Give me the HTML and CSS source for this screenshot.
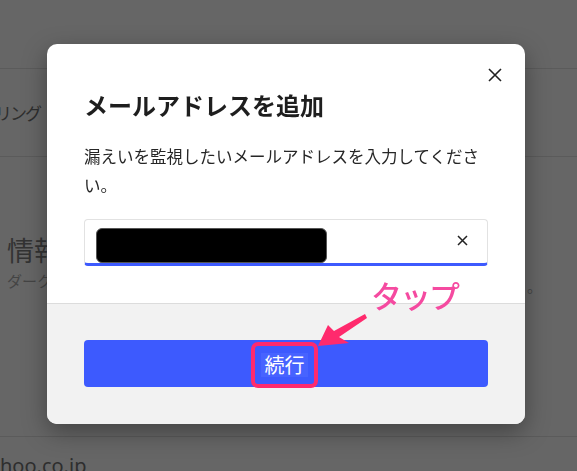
FILE: index.html
```html
<!DOCTYPE html>
<html lang="ja">
<head>
<meta charset="utf-8">
<title>メールアドレスを追加</title>
<link rel="stylesheet" href="styles.css">
</head>
<body>
<div class="page">
  <div class="row row-top"></div>
  <div class="row row-menu"><span class="menu-text">リング</span></div>
  <div class="row row-info">
    <div class="info-title">情報</div>
    <div class="info-desc"><span>ダーク</span><span class="info-end">。</span></div>
  </div>
  <div class="row row-domain">hoo.co.jp</div>
</div>

<div class="modal">
  <div class="modal-body">
    <button class="close" aria-label="閉じる">
      <svg width="14" height="14" viewBox="0 0 14 14"><path d="M1 1L13 13M13 1L1 13" stroke="#222" stroke-width="1.6" fill="none"/></svg>
    </button>
    <h1 class="title">メールアドレスを追加</h1>
    <p class="desc">漏えいを監視したいメールアドレスを入力してください。</p>
    <div class="input">
      <span class="redact"></span>
      <span class="clear">
        <svg width="11" height="11" viewBox="0 0 11 11"><path d="M1 1L10 10M10 1L1 10" stroke="#222" stroke-width="1.5" fill="none"/></svg>
      </span>
    </div>
  </div>
  <div class="modal-foot">
    <button class="btn"><span class="mark"><span class="btn-label">続行</span></span></button>
  </div>
  <div class="note">タップ</div>
  <svg class="arrow" width="80" height="60" viewBox="0 0 80 60">
    <polygon points="18,46 28,25 34,31 65,14 67,18 39,37 49,43" fill="#ff2a6d"/>
  </svg>
</div>
</body>
</html>
```
FILE: styles.css
```css
html, body {
  margin: 0;
  padding: 0;
}
body {
  width: 577px;
  height: 471px;
  overflow: hidden;
  background: #666666;
  font-family: "Noto Sans CJK JP", "Noto Sans", sans-serif;
  color: #333;
}
.page {
  display: flex;
  flex-direction: column;
}
.row {
  border-bottom: 1px solid #5b5b5b;
}
.row-top {
  height: 68px;
}
.row-menu {
  height: 87px;
  display: flex;
  align-items: center;
}
.menu-text {
  font-size: 17px;
  color: #2e2e2e;
  margin-left: -5px;
  letter-spacing: -2px;
}
.row-info {
  height: 280px;
  box-sizing: border-box;
  padding-top: 73px;
  padding-left: 7px;
}
.info-title {
  font-size: 27px;
  line-height: 40px;
  font-weight: 400;
  color: #333;
}
.info-desc {
  display: flex;
  font-size: 15px;
  line-height: 22px;
  color: #444;
}
.info-end {
  margin-left: auto;
  margin-right: 35px;
  margin-top: 5px;
}
.row-domain {
  border-bottom: none;
  padding-top: 17px;
  font-family: "Noto Sans", sans-serif;
  font-size: 20px;
  line-height: 24px;
  color: #2e2e2e;
}

.modal {
  position: fixed;
  left: 47px;
  top: 44px;
  width: 478px;
  height: 380px;
  background: #fff;
  border-radius: 10px;
  overflow: hidden;
  box-shadow: 0 8px 24px rgba(0, 0, 0, 0.35);
  display: flex;
  flex-direction: column;
}
.modal-body {
  position: relative;
  height: 259px;
  box-sizing: border-box;
  padding: 45px 37px 0;
}
.close {
  position: absolute;
  left: 441px;
  top: 24px;
  width: 14px;
  height: 14px;
  padding: 0;
  border: 0;
  background: none;
  display: flex;
}
.title {
  margin: 0;
  font-size: 24px;
  line-height: 32px;
  font-weight: 700;
  color: #1e1e1e;
}
.desc {
  margin: 21px 0 0;
  font-size: 16.5px;
  line-height: 29px;
  color: #262626;
}
.input {
  margin-top: 19px;
  height: 47px;
  box-sizing: border-box;
  border: 1px solid #e2e2e2;
  border-bottom: 3px solid #3d5afe;
  border-radius: 4px;
  display: flex;
  align-items: flex-end;
  padding: 0 19px 0 11px;
}
.redact {
  width: 231px;
  height: 35px;
  background: #000;
  border: 1px solid #555;
  box-sizing: border-box;
  border-radius: 6px;
}
.clear {
  margin-left: auto;
  align-self: center;
  display: flex;
  margin-top: -3px;
}
.modal-foot {
  flex: 1;
  background: #f2f2f2;
  border-top: 1px solid #dcdcdc;
  padding: 36px 37px 0;
}
.btn {
  width: 100%;
  height: 47px;
  border: 0;
  border-radius: 4px;
  background: #3d5afe;
  display: flex;
  justify-content: center;
  align-items: center;
  padding: 0;
  font-family: inherit;
}
.mark {
  display: block;
  border: 4px solid #ff2a6d;
  border-radius: 7px;
  padding: 7px 6px;
  margin-top: 2px;
  margin-left: -3px;
}
.btn-label {
  display: block;
  background: #4763ff;
  color: #fff;
  font-size: 20px;
  line-height: 24px;
  padding: 0 3.5px;
}
.note {
  position: absolute;
  left: 324px;
  top: 231px;
  font-size: 31px;
  line-height: 40px;
  font-weight: 500;
  color: #f54aa0;
  letter-spacing: -2px;
}
.arrow {
  position: absolute;
  left: 253px;
  top: 256px;
}
```
